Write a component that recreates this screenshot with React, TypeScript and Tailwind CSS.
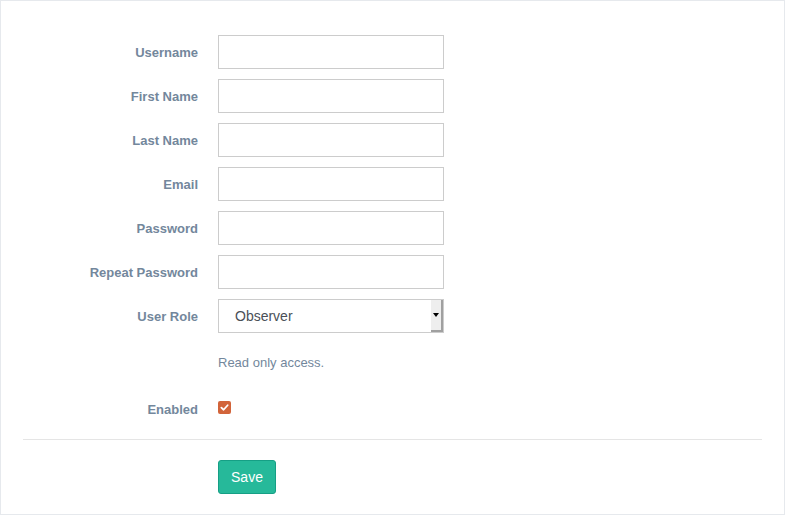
const fields = ["Username", "First Name", "Last Name", "Email", "Password", "Repeat Password"];

function Label({ children, className = "pt-[2px]" }: { children: React.ReactNode; className?: string }) {
  return (
    <label className={`w-[197px] shrink-0 text-right text-[13px] font-bold text-[#73879c] ${className}`}>
      {children}
    </label>
  );
}

export default function App() {
  return (
    <div
      className="w-[785px] h-[515px] border border-[#e6e9ed] bg-white text-[#73879c]"
      style={{ fontFamily: '"Liberation Sans", Arial, sans-serif' }}
    >
      <div className="pt-[34px] flex flex-col gap-[10px]">
        {fields.map((f) => (
          <div key={f} className="flex items-center gap-[20px]">
            <Label>{f}</Label>
            <input
              type={f.includes("Password") ? "password" : "text"}
              className="w-[226px] h-[34px] border border-[#cccccc] bg-white outline-none"
            />
          </div>
        ))}
        <div className="flex items-center gap-[20px]">
          <Label>User Role</Label>
          <div className="w-[226px] h-[34px] border border-[#cccccc] bg-white flex items-center">
            <span className="flex-1 pl-[16px] text-[14px] text-[#4a4f57]">Observer</span>
            <div className="w-[12px] h-[32px] bg-[#eeeeee] border-r-2 border-b-2 border-[#a0a0a0] flex items-center justify-center">
              <div className="w-0 h-0 border-l-[3px] border-r-[3px] border-t-[4px] border-l-transparent border-r-transparent border-t-black" />
            </div>
          </div>
        </div>
      </div>

      <p className="mt-[20px] ml-[217px] text-[13px] leading-[20px] text-[#73879c]">Read only access.</p>

      <div className="mt-[27px] flex items-start gap-[20px] h-[20px]">
        <Label className="pt-0">Enabled</Label>
        <span className="mt-[1px] w-[13px] h-[13px] rounded-[2px] bg-[#d2643a] flex items-center justify-center">
          <svg width="9" height="9" viewBox="0 0 10 10" fill="none">
            <path d="M1.5 5.2 L4 7.5 L8.5 2.5" stroke="white" strokeWidth="2" strokeLinecap="round" strokeLinejoin="round" />
          </svg>
        </span>
      </div>

      <hr className="mt-[19px] mx-[22px] border-0 border-t border-[#e5e5e5]" />

      <div className="mt-[20px] ml-[217px]">
        <button className="w-[58px] h-[34px] rounded-[3px] bg-[#26b99a] border border-[#169f85] text-white text-[14px]">
          Save
        </button>
      </div>
    </div>
  );
}
